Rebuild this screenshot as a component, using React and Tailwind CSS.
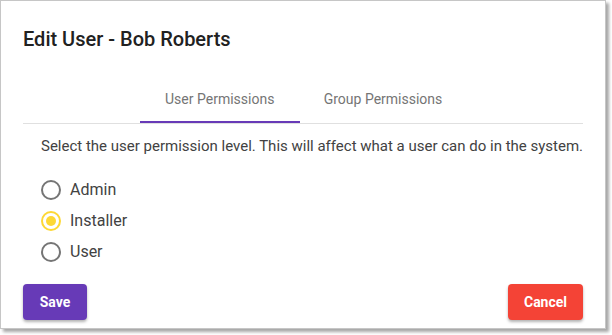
import { useState } from 'react';

const OPTIONS = ['Admin', 'Installer', 'User'];

function Radio({ label, checked, onSelect }) {
  return (
    <label className="flex h-[31px] cursor-pointer items-center" onClick={onSelect}>
      <span
        className={
          checked
            ? 'flex h-[20px] w-[20px] items-center justify-center rounded-full border-2 border-[#fdd835]'
            : 'flex h-[20px] w-[20px] items-center justify-center rounded-full border-2 border-[#757575]'
        }
      >
        {checked && <span className="h-[10px] w-[10px] rounded-full bg-[#fdd835]" />}
      </span>
      <span className="ml-[9px] text-[16px] text-[#424242]">{label}</span>
    </label>
  );
}

export default function App() {
  const [tab, setTab] = useState('user');
  const [level, setLevel] = useState('Installer');

  return (
    <div className="h-[335px] w-[612px] bg-white font-['Roboto',sans-serif]">
      <div className="flex h-[329px] w-[606px] flex-col border border-[#c6c6c6] bg-white px-[22px] shadow-[3px_3px_3px_rgba(0,0,0,0.35)]">
        <h1 className="pt-[24px] text-[20px] leading-[28px] font-medium text-[#212121]">
          Edit User - Bob Roberts
        </h1>

        {/* tabs */}
        <div className="mt-[22px] flex justify-center border-b border-[#e0e0e0]">
          <button
            className="relative h-[48px] min-w-[160px] px-[24px] text-[14px] text-[#757575]"
            onClick={() => setTab('user')}
          >
            User Permissions
            {tab === 'user' && (
              <span className="absolute right-0 bottom-0 left-0 h-[2px] bg-[#673ab7]" />
            )}
          </button>
          <button
            className="relative h-[48px] min-w-[160px] px-[24px] text-[14px] text-[#757575]"
            onClick={() => setTab('group')}
          >
            Group Permissions
            {tab === 'group' && (
              <span className="absolute right-0 bottom-0 left-0 h-[2px] bg-[#673ab7]" />
            )}
          </button>
        </div>

        <p className="mt-[12px] pl-[18px] text-[15px] leading-[20px] whitespace-nowrap text-[#424242]">
          Select the user permission level. This will affect what a user can do in the system.
        </p>

        <div className="mt-[18px] flex flex-col pl-[18px]">
          {OPTIONS.map((o) => (
            <Radio key={o} label={o} checked={level === o} onSelect={() => setLevel(o)} />
          ))}
        </div>

        <div className="mt-[17px] flex justify-between">
          <button className="h-[36px] w-[64px] rounded-[4px] bg-[#673ab7] text-[14px] font-bold text-white shadow-[0_2px_3px_rgba(0,0,0,0.3)]">
            Save
          </button>
          <button className="h-[36px] w-[75px] rounded-[4px] bg-[#f44336] text-[14px] font-bold text-white shadow-[0_2px_3px_rgba(0,0,0,0.3)]">
            Cancel
          </button>
        </div>
      </div>
    </div>
  );
}
